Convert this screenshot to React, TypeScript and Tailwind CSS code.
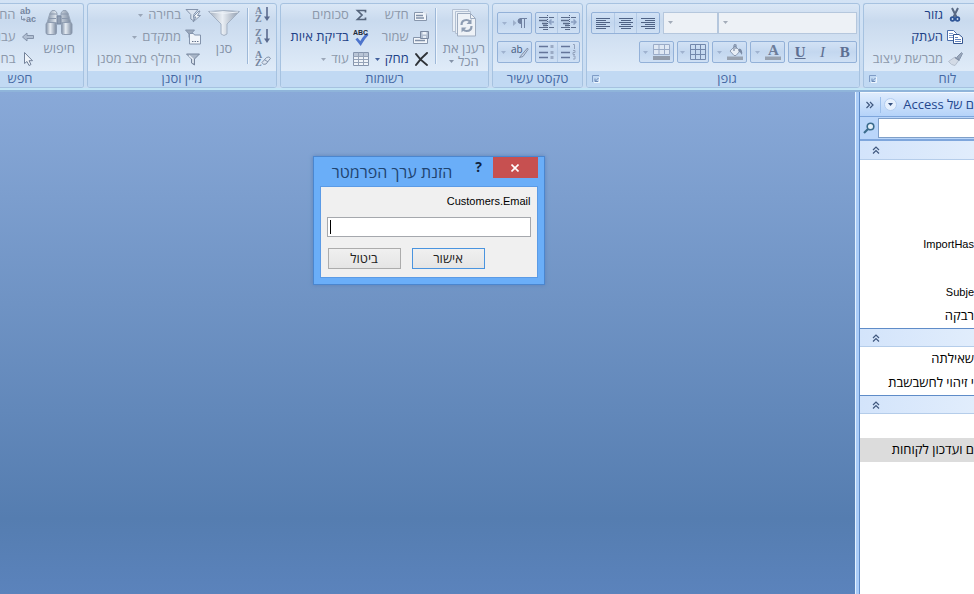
import React from 'react'
import { clsx } from 'clsx'

const Caret = ({ className }: { className?: string }) => (
  <svg viewBox="0 0 5 3" className={clsx('h-[3px] w-[5px] shrink-0', className)} fill="currentColor">
    <path d="M0 0h5L2.5 3z" />
  </svg>
)

interface IconProps {
  children: React.ReactNode;
  className?: string;
  box?: string;
}

const Icon: React.FC<IconProps> = ({ children, className, box = '0 0 16 16' }) => (
  <svg viewBox={box} className={clsx('shrink-0 [direction:ltr]', className ?? 'h-4 w-4')} fill="none" stroke="#8494ac">
    {children}
  </svg>
)

const SortIcon = ({ top, bottom, children }: { top: string; bottom: string; children: React.ReactNode }) => (
  <Icon className="h-[17px] w-4" box="0 0 16 17">
    <g fill="#75859f" stroke="none" fontSize="10" fontWeight="bold" fontFamily="Liberation Serif, serif">
      <text x="0" y="8">{top}</text>
      <text x="0" y="16">{bottom}</text>
    </g>
    {children}
  </Icon>
)

const DownArrow = () => (
  <>
    <path d="M12 1v11" stroke="#5a6a8e" strokeWidth="1.6" />
    <path d="M9 10.500h6L12 15z" fill="#5a6a8e" stroke="none" />
  </>
)

const Eraser = () => (
  <>
    <path d="M7 12.500 11.500 7.500q3-1.500 4 .8L11 14q-3 1.500-4-1.500z" fill="#dde6f2" />
    <path d="m9.500 9.800 3.500 2" />
  </>
)

const FilterBigIcon = () => (
  <Icon className="h-7 w-[34px]" box="0 0 34 28">
    <defs>
      <linearGradient id="funnel" x1="0" x2="1" y1="0" y2="0">
        <stop offset="0" stopColor="#a3aebd" />
        <stop offset=".45" stopColor="#e9eef4" />
        <stop offset="1" stopColor="#8f9cae" />
      </linearGradient>
    </defs>
    <path d="M1.500 2.500q15.500-2 31 0L20 15v10q-3 3-6 0V15z" fill="url(#funnel)" stroke="#a3b1c4" />
    <path d="M3 3q14 2.500 28 0" stroke="#eef3f9" />
  </Icon>
)

const SelectionIcon = () => (
  <Icon>
    <path d="M1 2.500h12L8.800 7.500V14L5.800 12V7.500z" fill="#dbe4f0" />
    <path d="m14 4-6 6h3l-3 5 7.500-6.500h-3L15 4z" fill="#f1f5fa" />
  </Icon>
)

const AdvancedIcon = () => (
  <Icon>
    <path d="M.5 1h9L6 5v5L4 8.500V5z" fill="#9aa8bc" />
    <path d="M4.500 4.500h4l1 1.500h6v9h-11z" fill="#f1f5fa" />
    <path d="M7 12.500h1.500M9.500 12.500H11M12 12.500h1.500" stroke="#66748c" />
  </Icon>
)

const ToggleFilterIcon = () => (
  <Icon>
    <path d="M1.500 3h13L9.500 8v6L6.500 12V8z" fill="#a9b6c8" stroke="#76859c" />
    <path d="m4 4.500 4 3.500v4" stroke="#e9eff7" strokeWidth="1.400" />
  </Icon>
)

const BinocularsIcon = () => (
  <Icon className="h-7 w-7" box="0 0 28 28">
    <defs>
      <linearGradient id="lens" x1="0" x2="1" y1="0" y2="0">
        <stop offset="0" stopColor="#8090a6" />
        <stop offset=".4" stopColor="#e6ecf3" />
        <stop offset="1" stopColor="#7a899f" />
      </linearGradient>
    </defs>
    <path d="M5 4 7 1.500h3L12 4v3h4V4l2-2.500h3L23 4l3 10H2z" fill="url(#lens)" stroke="#98a6b9" />
    <path d="M5 5h7M16 5h7M4 9.500h7M17 9.500h7" stroke="#8a98ad" />
    <path d="M12 7v8h4V7z" fill="#8f9db2" stroke="#77869e" />
    <rect x="1" y="13.500" width="10.500" height="12" rx="2" fill="url(#lens)" stroke="#8e9cb1" />
    <rect x="16.500" y="13.500" width="10.500" height="12" rx="2" fill="url(#lens)" stroke="#8e9cb1" />
  </Icon>
)

const ReplaceIcon = () => (
  <Icon>
    <g fill="#7686a0" stroke="none" fontSize="9" fontWeight="bold" fontFamily="Liberation Sans, sans-serif">
      <text x="0" y="7">ab</text>
      <text x="6" y="15">ac</text>
    </g>
    <path d="M1.500 9v3.500H5M3.500 11 5 12.500 3.500 14" />
  </Icon>
)

const GoToIcon = () => (
  <Icon>
    <path d="M2.500 8 7 4v2.500h6.500v3H7V12z" fill="#b1bfd2" stroke="#8493aa" />
  </Icon>
)

const PointerIcon = () => (
  <Icon>
    <path d="M4.500 1.500v11L7 10.500l2 4 2-1-2-3.800h3.500z" fill="#eef3f9" stroke="#73829a" />
  </Icon>
)

const RefreshIcon = () => (
  <Icon className="h-7 w-[26px]" box="0 0 26 28">
    <path d="M1.500.5h16v22h-16z" fill="#e9eff6" stroke="#b4c1d3" />
    <path d="M4.500 2.500h15v22h-15z" fill="#e9eff6" stroke="#b4c1d3" />
    <path d="M6.500 4.500h13l5 5v17.500h-18z" fill="#eef2f7" stroke="#9eacc0" />
    <path d="M19.500 4.500v5h5" stroke="#9eacc0" />
    <path d="M10.500 16q0-5 5-5 2 0 3.500 1.500" strokeWidth="2.200" stroke="#8e9db3" />
    <path d="M20.500 10v5h-5z" fill="#8e9db3" stroke="none" />
    <path d="M20.500 17q0 5-5 5-2 0-3.500-1.500" strokeWidth="2.200" stroke="#8e9db3" />
    <path d="M10.500 23.500v-5h5z" fill="#8e9db3" stroke="none" />
  </Icon>
)

const NewRecordIcon = () => (
  <Icon>
    <path d="M1.500 5.500h12v8h-12z" fill="#f1f5fa" stroke="#8796ac" />
    <path d="M3 8.500h7M3 11h8" stroke="#8090a8" strokeWidth="1.400" />
    <path d="M13 2.500v6M10 5.500h6M11 3.500l4 4m0-4-4 4" stroke="#dbe4ef" />
  </Icon>
)

const SaveIcon = () => (
  <Icon>
    <path d="M.5 8.500h14v6H.5z" fill="#f1f5fa" stroke="#8796ac" />
    <path d="M2 11.500h10" stroke="#8090a8" strokeWidth="1.400" />
    <path d="M7.500 2.500h8v7h-8z" fill="#b2bfd1" stroke="#7a89a1" />
    <path d="M9.500 3h4v2.500h-4z" fill="#eef3f9" stroke="none" />
    <path d="M10 7h3v2h-3z" fill="#e4ebf4" stroke="none" />
  </Icon>
)

const DeleteIcon = () => (
  <Icon>
    <path d="M3 3q4 6 11 11M14 2Q8 7 3 14" stroke="#2f3338" strokeWidth="2" strokeLinecap="round" />
  </Icon>
)

const SigmaIcon = () => (
  <Icon>
    <path d="M12.500 5.500V3.500H4.500L9 8l-4.500 4.500h8v-2" stroke="#56657c" strokeWidth="1.700" />
  </Icon>
)

const SpellingIcon = () => (
  <Icon className="h-[17px] w-4" box="0 0 16 17">
    <path d="m3.500 9.500 4 5Q10.500 9 14.500 5" stroke="#4d74cc" strokeWidth="2.800" />
    <text x="0" y="6" fontSize="7" fontWeight="bold" fill="#222a3a" stroke="none" fontFamily="Liberation Sans, sans-serif">ABC</text>
  </Icon>
)

const TableIcon = () => (
  <Icon>
    <path d="M.5 1.500h15v13H.5z" fill="#eef3f9" />
    <path d="M1 2h14v3H1z" fill="#b9c5d6" stroke="none" />
    <path d="M.5 5.500h15M.5 8.500h15M.5 11.500h15M5.500 1.500v13M10.500 1.500v13" stroke="#95a3b8" />
  </Icon>
)

const CutIcon = () => (
  <Icon>
    <path d="m5 1 4.500 9M11 1 6.500 10" stroke="#5a6a84" strokeWidth="2" />
    <circle cx="5.500" cy="12" r="1.800" stroke="#2e5597" strokeWidth="1.800" />
    <circle cx="10.500" cy="12" r="1.800" stroke="#2e5597" strokeWidth="1.800" />
  </Icon>
)

const CopyIcon = () => (
  <Icon>
    <path d="M.5 1.500h6l3 3v7h-9z" fill="#fff" stroke="#4a6daa" />
    <path d="M2 4.500h4M2 6.500h4M2 8.500h4" stroke="#7d9acb" />
    <path d="M6.500 5.500h5.500l3.500 3v6h-9z" fill="#fff" stroke="#34558f" />
    <path d="M8 8.500h3M8 10.500h6M8 12.500h6" stroke="#6285c0" />
  </Icon>
)

const BrushIcon = () => (
  <Icon>
    <path d="m9.500 6.500 5-5 1 1-3 6z" fill="#9aa7ba" />
    <path d="M1.500 10.500 8 6l4 3-4 5.500q-3.500 0-6.500-4z" fill="#d3dbe6" stroke="#b4bfce" />
    <path d="m8 6.500 4.500 3" stroke="#7d8ca3" strokeWidth="1.500" />
  </Icon>
)

const AlignIcon = ({ d }: { d: string }) => (
  <Icon>
    <path d={d} stroke="#4f6284" />
  </Icon>
)

const alignLeft = 'M1 3.500h14M1 5.500h10M1 7.500h14M1 9.500h10M1 11.500h14M1 13.500h10'
const alignCenter = 'M1 3.500h14M3 5.500h10M1 7.500h14M3 9.500h10M1 11.500h14M3 13.500h10'
const alignRight = 'M1 3.500h14M5 5.500h10M1 7.500h14M5 9.500h10M1 11.500h14M5 13.500h10'

const IndentIcon = ({ flip }: { flip?: boolean }) => (
  <Icon>
    <path d="M0 2.500h8M0 12.500h8M10 2.500h5M10 12.500h5M4 14.500h4" stroke="#5b6c8b" />
    <path d={flip ? 'M0 5.500h8M3 8.500h5M4 10.500h4' : 'M0 5.500h8M2 8.500h6M4 10.500h4'} stroke="#5b6c8b" strokeWidth="1.600" />
    <path d="M8.500 0v16" stroke="#4f6081" strokeDasharray="1 1" />
    <path d={flip ? 'M10 7h5M12.500 4.500 10 7l2.500 2.500' : 'M10 7h5M12.500 4.500 15 7l-2.500 2.500'} stroke="#8ba0c2" strokeWidth="1.500" />
  </Icon>
)

const ListIcon = ({ numbered }: { numbered?: boolean }) => (
  <Icon>
    <path d="M0 2.500h9M0 8.500h9M0 13.500h9" stroke="#64759a" strokeWidth="1.300" />
    {numbered ? (
      <path d="M12 .5h1.500V5M12 6.500h2v2h-2v2h2M12 12h2v3h-2" stroke="#93a3bd" />
    ) : (
      <path d="M11.500 2.500h3M11.500 8.500h3M11.500 13.500h3" stroke="#9aaac4" strokeWidth="3" />
    )}
  </Icon>
)

const DirectionIcon = () => (
  <Icon>
    <path d="M9 3.500q-3 0-3 2.500t3 2.500zM9.500 3v10M12.500 3v10M8 3.500h7" fill="#6f80a0" stroke="#6f80a0" />
    <path d="M1 5v6l3.500-3z" fill="#9dafca" stroke="none" />
  </Icon>
)

const HighlightIcon = () => (
  <Icon className="h-4 w-[18px]" box="0 0 18 16">
    <text x="0" y="9" fontSize="10" fill="#44587c" stroke="none" fontFamily="Open Sans, sans-serif">ab</text>
    <path d="m16.500 4-6 7-2 2.500 3.500-1 5-7z" fill="#c9d6e8" stroke="#7f90ab" />
  </Icon>
)

const GridIcon = () => (
  <Icon>
    <path d="M.5.5h15v15H.5zM.5 5.500h15M.5 10.500h15M5.500.5v15M10.500.5v15" stroke="#7388ac" />
  </Icon>
)

const RowColorIcon = () => (
  <Icon className="h-4 w-[17px]" box="0 0 17 16">
    <path d="M.5.5h16v10H.5z" fill="#dfe8f4" stroke="#9aabc7" />
    <path d="M.5 5.500h16M6 .5v10M11.500.5v10" stroke="#9aabc7" />
    <path d="M0 12h17v4H0z" fill="#929cab" stroke="none" />
  </Icon>
)

const FillIcon = () => (
  <Icon>
    <path d="m3 7 5-5 5 5-4 4.500H7z" fill="#e8eef6" stroke="#8d9cb3" />
    <path d="M7 7V2q0-2 2-1v4" stroke="#7b8ba5" strokeWidth="1.200" />
    <path d="M12.500 4.500q3.500 1 2.500 6.500-1.500-3-4-4z" fill="#7b8ba5" stroke="none" />
    <path d="M0 12.500h16v3.500H0z" fill="#98a2b0" stroke="none" />
  </Icon>
)

const FontColorIcon = () => (
  <Icon>
    <text x="3" y="11" fontSize="15" fontWeight="bold" fill="#6c7d9a" stroke="none" fontFamily="Liberation Serif, serif">A</text>
    <path d="M0 12.500h16v3.500H0z" fill="#98a2b0" stroke="none" />
  </Icon>
)

const LauncherIcon = () => (
  <Icon className="h-2 w-2" box="0 0 8 8">
    <path d="M.5 7V.5H7" stroke="#7f9cc6" />
    <path d="M6.500 3 3.500 6M3 3.500v3h3" stroke="#6b88b5" />
    <path d="M7.500 2v5.500H2" stroke="#eef5fd" />
  </Icon>
)

interface GroupProps {
  title: string;
  className?: string;
  launcher?: boolean;
  children: React.ReactNode;
}

const Group: React.FC<GroupProps> = ({ title, className, launcher, children }) => (
  <section
    className={clsx(
      'flex flex-col overflow-hidden rounded-[3px] border border-[#a6c2e0] bg-linear-to-b from-[#dae7f6] from-0% via-[#c9daee] via-20% to-[#dfebf8] to-80%',
      className
    )}
  >
    <div className="h-[67px]">{children}</div>
    <h2 className="flex h-4 items-center bg-[#c1d9f3] px-[5px] text-[13px] leading-[14px] font-normal text-[#4669a4]">
      {launcher && <button aria-label={`${title}…`}><LauncherIcon /></button>}
      <span className="flex-1 pb-0.5 text-center">{title}</span>
    </h2>
  </section>
)

interface ToolProps {
  label: string;
  icon: React.ReactNode;
  active?: boolean;
  menu?: boolean;
}

const Tool: React.FC<ToolProps> = ({ label, icon, active, menu }) => (
  <button
    className={clsx(
      'flex h-[22px] items-center gap-1 text-[13px] whitespace-nowrap',
      active ? 'text-[#1d3f86]' : 'text-[#8c98aa]'
    )}
  >
    {icon}
    <span>{label}</span>
    {menu && <Caret className="mx-px opacity-80" />}
  </button>
)

const BigTool = ({ icon, children }: { icon: React.ReactNode; children: React.ReactNode }) => (
  <button className="flex flex-col items-center gap-[5px] pt-[5px] text-[13px] leading-[13px] text-[#8593a8]">
    {icon}
    {children}
  </button>
)

const Separator = () => <div className="mt-1 h-14 w-0.5 border-l border-[#9db8d8] bg-[#edf4fc]" />

interface CellProps {
  label: string;
  children: React.ReactNode;
  menu?: boolean;
}

const Cell: React.FC<CellProps> = ({ label, children, menu }) => (
  <button
    aria-label={label}
    className={clsx('flex flex-1 items-center justify-center text-[#9fb2cf]', menu && 'gap-[5px]')}
  >
    {menu && <Caret />}
    {children}
  </button>
)

const Cells = ({ className, children }: { className: string; children: React.ReactNode }) => (
  <div
    className={clsx(
      'flex h-[22px] divide-x divide-[#b3cae6] rounded-[2px] border border-[#93b1d8] bg-linear-to-b from-[#d2e2f5] via-[#c3d7ef] to-[#cfe0f4]',
      className
    )}
  >
    {children}
  </div>
)

const FontSelect = ({ label, className }: { label: string; className: string }) => (
  <div className={clsx('relative', className)}>
    <select aria-label={label} className="block h-[22px] w-full appearance-none border border-[#b5c7dd] bg-[#edf1f6]" />
    <Caret className="pointer-events-none absolute top-[9px] left-[5px] text-[#a3acb9]" />
  </div>
)

const Ribbon = () => (
  <header className="border-b-2 border-[#8fb4da] bg-[#c3e6f6] pb-[2px]">
    <div className="flex gap-[3px] overflow-hidden bg-linear-to-b from-[#d3e3f5] to-[#c8dcf2] pt-[3px]">
      <Group title="חפש" className="w-[84px] rounded-l-none border-l-0 [&_h2]:pr-12">
        <div dir="rtl" className="flex gap-2 pr-2">
          <BigTool icon={<BinocularsIcon />}>חיפוש</BigTool>
          <div className="flex flex-col items-start">
            <Tool label="החלף" icon={<ReplaceIcon />} />
            <Tool label="עבור אל" icon={<GoToIcon />} menu />
            <Tool label="בחר" icon={<PointerIcon />} menu />
          </div>
        </div>
      </Group>
      <Group title="מיין וסנן" className="w-[190px]">
        <div dir="rtl" className="flex gap-[6px] pr-[5px]">
          <div className="flex flex-col gap-[5px] pt-[2px]">
            <button aria-label="מיון בסדר עולה"><SortIcon top="A" bottom="Z"><DownArrow /></SortIcon></button>
            <button aria-label="מיון בסדר יורד"><SortIcon top="Z" bottom="A"><DownArrow /></SortIcon></button>
            <button aria-label="נקה מיון"><SortIcon top="A" bottom="Z"><Eraser /></SortIcon></button>
          </div>
          <Separator />
          <BigTool icon={<FilterBigIcon />}>סנן</BigTool>
          <div className="flex flex-col items-start">
            <Tool label="בחירה" icon={<SelectionIcon />} menu />
            <Tool label="מתקדם" icon={<AdvancedIcon />} menu />
            <Tool label="החלף מצב מסנן" icon={<ToggleFilterIcon />} />
          </div>
        </div>
      </Group>
      <Group title="רשומות" className="w-[209px]">
        <div dir="rtl" className="flex gap-[6px] pr-[3px]">
          <BigTool icon={<RefreshIcon />}>
            <span className="flex flex-col items-center">
              <span>רענן את</span>
              <span className="flex items-center gap-1">הכל <Caret /></span>
            </span>
          </BigTool>
          <Separator />
          <div className="flex w-[54px] flex-col items-start">
            <Tool label="חדש" icon={<NewRecordIcon />} />
            <Tool label="שמור" icon={<SaveIcon />} />
            <Tool label="מחק" icon={<DeleteIcon />} active menu />
          </div>
          <div className="flex flex-col items-start">
            <Tool label="סכומים" icon={<SigmaIcon />} />
            <Tool label="בדיקת איות" icon={<SpellingIcon />} active />
            <Tool label="עוד" icon={<TableIcon />} menu />
          </div>
        </div>
      </Group>
      <Group title="טקסט עשיר" className="w-[91px]">
        <div className="grid grid-cols-[35px_45px] gap-x-[3px] gap-y-[7px] pt-2 pl-1">
          <Cells className="w-full"><Cell label="כיוון טקסט" menu><DirectionIcon /></Cell></Cells>
          <Cells className="w-full">
            <Cell label="הקטן כניסה"><IndentIcon flip /></Cell>
            <Cell label="הגדל כניסה"><IndentIcon /></Cell>
          </Cells>
          <Cells className="w-full"><Cell label="צבע סימון" menu><HighlightIcon /></Cell></Cells>
          <Cells className="w-full">
            <Cell label="תבליטים"><ListIcon /></Cell>
            <Cell label="מספור"><ListIcon numbered /></Cell>
          </Cells>
        </div>
      </Group>
      <Group title="גופן" className="min-w-0 flex-1" launcher>
        <div className="flex flex-col gap-[7px] pt-2 pr-[2px] pl-1">
          <div className="flex">
            <Cells className="mr-[3px] w-[69px]">
              <Cell label="ישר לשמאל"><AlignIcon d={alignLeft} /></Cell>
              <Cell label="מרכז"><AlignIcon d={alignCenter} /></Cell>
              <Cell label="ישר לימין"><AlignIcon d={alignRight} /></Cell>
            </Cells>
            <FontSelect label="גודל גופן" className="w-[55px]" />
            <FontSelect label="שם גופן" className="flex-1" />
          </div>
          <div className="flex justify-end gap-[3px]">
            <Cells className="w-[35px]"><Cell label="צבע שורה" menu><RowColorIcon /></Cell></Cells>
            <Cells className="w-8"><Cell label="קווי רשת" menu><GridIcon /></Cell></Cells>
            <Cells className="w-[35px]"><Cell label="צבע מילוי" menu><FillIcon /></Cell></Cells>
            <Cells className="w-[35px]"><Cell label="צבע גופן" menu><FontColorIcon /></Cell></Cells>
            <Cells className="w-[69px] divide-x-0 font-['Liberation_Serif',serif] text-[15px] leading-5">
              <Cell label="קו תחתון"><span className="font-bold text-[#5d6f92] underline">U</span></Cell>
              <Cell label="נטוי"><span className="text-[#5d6f92] italic">I</span></Cell>
              <Cell label="מודגש"><span className="font-bold text-[#5d6f92]">B</span></Cell>
            </Cells>
          </div>
        </div>
      </Group>
      <Group title="לוח" className="w-[111px] rounded-r-none border-r-0 [&_h2]:pr-0 [&_h2_span]:pl-11" launcher>
        <div dir="rtl" className="flex flex-col items-start pr-[11px]">
          <Tool label="גזור" icon={<CutIcon />} active />
          <Tool label="העתק" icon={<CopyIcon />} active />
          <Tool label="מברשת עיצוב" icon={<BrushIcon />} />
        </div>
      </Group>
    </div>
  </header>
)

const ParameterDialog = () => (
  <form
    role="dialog"
    aria-labelledby="dialog-title"
    className="w-[232px] border border-[#4a86cf] bg-[#6aaef8] px-[6px] pb-[6px] shadow-[0_0_4px_#5d82b5]"
  >
    <div className="flex h-[29px] items-start">
      <h1 id="dialog-title" dir="rtl" className="flex-1 pt-[3px] text-center text-base leading-6 text-[#1f4470]">
        הזנת ערך הפרמטר
      </h1>
      <button type="button" aria-label="עזרה" className="w-7 text-sm leading-5 font-bold text-[#10243f]">?</button>
      <button type="button" aria-label="סגור" className="flex h-[21px] w-[45px] items-center justify-center bg-[#c75050]">
        <svg viewBox="0 0 8 8" className="h-2 w-2" stroke="#fff" strokeWidth="1.600">
          <path d="m.5.5 7 7m0-7-7 7" />
        </svg>
      </button>
    </div>
    <div className="border border-[#5b9be6] bg-[#f0f0f0] px-[6px] pb-2">
      <label htmlFor="param" className="block pt-[6px] text-right font-['Liberation_Sans',sans-serif] text-[11px] leading-4 text-black">
        Customers.Email
      </label>
      <div className="mt-2 flex h-5 items-center border border-[#a5a8ad] bg-white pl-0.5">
        <span className="h-[14px] w-px bg-black" />
        <input id="param" className="w-full bg-transparent text-xs outline-none" />
      </div>
      <div className="mt-[11px] flex gap-[11px] pl-px text-[13px] text-[#222]">
        <button type="button" className="h-[21px] w-[73px] border border-[#acacac] bg-linear-to-b from-[#f0f0f0] to-[#e5e5e5] leading-none">
          ביטול
        </button>
        <button type="submit" className="h-[21px] w-[73px] border border-[#4a94df] bg-linear-to-b from-[#f0f0f0] to-[#e5e5e5] leading-none">
          אישור
        </button>
      </div>
    </div>
  </form>
)

const Chevrons = ({ className }: { className?: string }) => (
  <svg viewBox="0 0 8 8" className={clsx('h-2 w-2', className)} fill="none" stroke="#40587f" strokeWidth="1.200">
    <path d="m1 4 3-3 3 3M1 7.500l3-3 3 3" />
  </svg>
)

const sections: { name: string; items: { text: string; latin?: boolean; selected?: boolean }[] }[] = [
  {
    name: 'טבלאות',
    items: [
      { text: '' },
      { text: '' },
      { text: '' },
      { text: 'ImportHas', latin: true },
      { text: '' },
      { text: 'Subje', latin: true },
      { text: 'רבקה' },
    ],
  },
  { name: 'שאילתות', items: [{ text: 'שאילתה' }, { text: 'י זיהוי לחשבשבת' }] },
  { name: 'טפסים', items: [{ text: '' }, { text: 'ם ועדכון לקוחות', selected: true }] },
]

const NavigationPane = () => (
  <aside className="flex w-[119px] shrink-0 flex-col border-l border-[#e3f2ff] bg-[#aaccf8] pl-[3px]">
    <div className="flex-1 border-l border-[#5f8cc8] bg-white">
      <div className="flex h-6 items-center overflow-hidden border-t border-[#f3f8ff] bg-linear-to-b from-[#dfecfd] to-[#b5d3f9]">
        <button aria-label="כווץ" className="flex w-[21px] justify-center border-r border-[#9dbfea] py-1">
          <Chevrons className="rotate-90" />
        </button>
        <button aria-label="תפריט" className="mx-[3px] flex h-[13px] w-[13px] shrink-0 items-center justify-center rounded-full border border-[#b3cdf0] bg-[#e6f0fd] text-[#34507f]">
          <Caret className="h-1 w-[7px]" />
        </button>
        <h2 dir="rtl" className="flex-1 text-[13px] whitespace-nowrap text-[#24478e]">ם של Access</h2>
      </div>
      <div className="flex h-[25px] border-t border-b-2 border-[#7ea6dc] bg-[#bad6fa] py-px">
        <button aria-label="חפש" className="flex w-[18px] items-center justify-center">
          <svg viewBox="0 0 12 12" className="h-3 w-3" fill="#e4f0fa" stroke="#3b6c8c" strokeWidth="1.600">
            <circle cx="7.500" cy="4.500" r="3.300" />
            <path d="M5 7 1 11" strokeWidth="2.200" />
          </svg>
        </button>
        <input aria-label="חיפוש" className="min-w-0 flex-1 border border-r-0 border-[#7f9fc8] bg-white" />
      </div>
      {sections.map((section, i) => (
        <section key={section.name}>
          <button
            aria-label={section.name}
            className={clsx(
              'flex h-[19px] w-full items-center border-b border-b-[#b5cdea] bg-linear-to-r from-[#d3e4fb] to-[#e1edfc] pl-3',
              i > 0 && 'border-t border-t-[#5f8cc8]'
            )}
          >
            <Chevrons />
          </button>
          <ul dir="rtl">
            {section.items.map((item, j) => (
              <li
                key={j}
                className={clsx(
                  'h-6 overflow-hidden whitespace-nowrap text-black',
                  item.latin ? "font-['Liberation_Sans',sans-serif] text-[11px] leading-6" : 'text-[13px] leading-[22px]',
                  item.selected && 'bg-[#dcdcdc]'
                )}
              >
                {item.text}
              </li>
            ))}
          </ul>
        </section>
      ))}
    </div>
  </aside>
)

export default function App() {
  return (
    <div className="flex min-h-screen flex-col overflow-hidden font-['Open_Sans','DejaVu_Sans',sans-serif]">
      <Ribbon />
      <div className="flex flex-1">
        <main className="flex flex-1 items-start justify-center bg-linear-to-b from-[#89a9d8] from-0% via-[#557db0] via-85% to-[#5b83bc] pt-16 pl-0.5">
          <ParameterDialog />
        </main>
        <NavigationPane />
      </div>
    </div>
  )
}
